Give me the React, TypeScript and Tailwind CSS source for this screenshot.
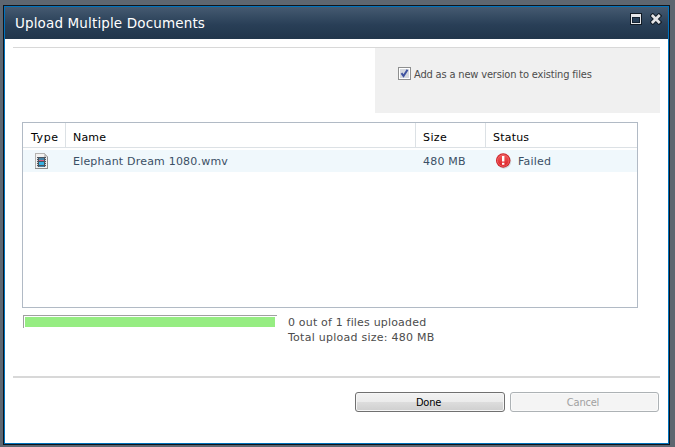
import React from 'react';

function FilmIcon() {
  return (
    <svg width="14" height="16" viewBox="0 0 14 16" shapeRendering="crispEdges">
      <path d="M0 0h10v1h1v1h1v1h1v13H0z" fill="#b4b3b1" />
      <path d="M1 1h8v3h3v11H1z" fill="#f3f2f1" />
      <path d="M9 1h1v2h2v1H9z" fill="#c9c9c8" />
      <path d="M12 4h1v12H0v-1h12z" fill="#8d8d8d" />
      <path d="M2 4h9v10H2z" fill="#4b5560" />
      <path d="M4 5h5v2H4z" fill="#4684a8" />
      <path d="M4 7h5v1H4z" fill="#dd5a80" />
      <path d="M4 9h5v3H4z" fill="#37b2e4" />
      <path d="M4 13h5v1H4z" fill="#4684a8" />
      <path d="M2 5h1v1H2zM2 7h1v1H2zM2 9h1v1H2zM2 11h1v1H2zM2 13h1v1H2zM10 5h1v1h-1zM10 7h1v1h-1zM10 9h1v1h-1zM10 11h1v1h-1zM10 13h1v1h-1z" fill="#d5d9dc" />
    </svg>
  );
}

function ErrorIcon() {
  return (
    <svg width="16" height="16" viewBox="0 0 16 16">
      <defs>
        <linearGradient id="red" x2="0" y2="1">
          <stop stopColor="#f25a5a" />
          <stop offset="1" stopColor="#dc1f25" />
        </linearGradient>
      </defs>
      <circle cx="8" cy="8.5" r="7.2" fill="#bdc4c8" opacity=".6" />
      <circle cx="7.2" cy="7.5" r="7.2" fill="#cf2027" />
      <circle cx="7.2" cy="7.5" r="5.8" fill="url(#red)" stroke="#f27d7d" strokeWidth=".7" />
      <path d="M6 3h2.4v5.5H6zM6 9.7h2.4v2H6z" fill="#fff" />
    </svg>
  );
}

function MaximizeIcon() {
  return (
    <svg width="12" height="12" viewBox="0 0 12 12" shapeRendering="crispEdges">
      <path d="M0 0h12v12H0z" fill="#111a24" />
      <path d="M1 1h10v10H1z" fill="#e7e7e9" />
      <path d="M2 4h8v6H2z" fill="#142231" />
      <path d="M3 5h6v4H3z" fill="#2a4058" />
    </svg>
  );
}

function CloseIcon() {
  return (
    <svg width="12" height="12" viewBox="0 0 12 12">
      <path d="M2.7 2.9l6.2 6.2M8.9 2.9L2.7 9.1" stroke="#141e29" strokeWidth="4.8" strokeLinecap="square" />
      <path d="M2.8 3l6 6M8.8 3l-6 6" stroke="#e4e4e6" strokeWidth="2.7" strokeLinecap="square" />
    </svg>
  );
}

export default function App() {
  return (
    <div className="h-[447px] w-[675px] overflow-hidden bg-[#5e6670] pt-[5px] pl-[3px] font-['DejaVu_Sans',sans-serif] text-[11px] leading-[15px] text-[#4c4c4c]">
      <div className="h-[440px] w-[667px] border border-[#10151d] bg-white">
        <div className="h-[438px] w-[665px] border border-[#0072bc]">
          <header className="flex h-8 items-start justify-between bg-linear-to-b from-[#455a71] via-[#293f57] via-55% to-[#21364b] pr-[6px] pl-[10px]">
            <h1 className="pt-[6px] text-[13.5px] leading-[20px] tracking-[0.14px] whitespace-nowrap text-white">Upload Multiple Documents</h1>
            <div className="flex gap-[8px] pt-[6px]">
              <MaximizeIcon />
              <CloseIcon />
            </div>
          </header>

          <main className="pt-2 pl-2">
            <div className="flex h-[66px] w-[647px] justify-end border-t border-[#d8d8d8]">
              <label className="flex w-[285px] items-start bg-[#f0f0f0] pt-[19px] pl-[23px]">
                <span className="flex size-[13px] shrink-0 border border-[#8e8f8f] bg-white p-px">
                  <svg width="9" height="9" viewBox="0 0 9 9">
                    <path d="M0 0h9v9H0z" fill="#d5d9df" />
                    <path d="M1.5 4.2l2 2.8L7.5.7" fill="none" stroke="#3f53a0" strokeWidth="2" />
                  </svg>
                </span>
                <span className="mt-px ml-[3px] font-['DejaVu_Sans_Condensed','DejaVu_Sans',sans-serif] text-[11px] leading-[13px] tracking-[-0.17px] whitespace-nowrap [font-stretch:condensed]">Add as a new version to existing files</span>
              </label>
            </div>

            <section className="mt-[9px] ml-[9px] h-[186px] w-[616px] border border-[#b1bac5]">
              <div className="flex h-[25px] border-b border-[#dce1e5] leading-[30px] tracking-[0.2px] text-black">
                <div className="w-[43px] border-r border-[#dce1e5] pl-[8px] tracking-[0.6px]">Type</div>
                <div className="w-[350px] border-r border-[#dce1e5] pl-[7px]">Name</div>
                <div className="w-[70px] border-r border-[#dce1e5] pl-[7px] tracking-[0.4px]">Size</div>
                <div className="pl-[7px]">Status</div>
              </div>
              <div className="mt-[2px] flex h-[22px] bg-[#f0f8fc] leading-[24px] tracking-[0.2px] text-[#3b4f65]">
                <div className="w-[43px] pt-[3px] pl-[12px]"><FilmIcon /></div>
                <div className="w-[350px] pl-[7px]">Elephant Dream 1080.wmv</div>
                <div className="w-[70px] pl-[7px]">480 MB</div>
                <div className="flex pl-[10px]">
                  <span className="pt-[3px]"><ErrorIcon /></span>
                  <span className="ml-[6px]">Failed</span>
                </div>
              </div>
            </section>

            <div className="mt-[7px] ml-[10px] flex h-[61px]">
              <div className="h-[13px] w-[254px] border-t border-l border-[#a0a0a0] pt-px pl-px">
                <div className="h-[10px] w-[250px] bg-[#96ed82]" />
              </div>
              <div className="ml-[11px] whitespace-nowrap">
                <div className="tracking-[0.18px]">0 out of 1 files uploaded</div>
                <div className="tracking-[0.25px]">Total upload size: 480 MB</div>
              </div>
            </div>

            <footer className="flex w-[647px] justify-end gap-[5px] border-t-2 border-[#d8d8d8] pt-[14px] pr-px font-['DejaVu_Sans_Condensed','DejaVu_Sans',sans-serif] [font-stretch:condensed]">
              <button className="h-5 w-[150px] rounded-[3px] border border-[#707070] bg-[linear-gradient(to_bottom,#f2f2f2,#ebebeb_50%,#dddddd_50%,#cfcfcf)] pr-[3px] text-[11px] leading-[17px] tracking-[-0.2px] text-black shadow-[inset_0_0_0_1px_#f6f6f6]">Done</button>
              <button disabled className="h-5 w-[149px] rounded-[3px] border border-[#adb2b5] bg-[#f4f4f4] pr-[3px] text-[11px] leading-[17px] tracking-[-0.2px] text-[#a0a0a0] shadow-[inset_0_0_0_1px_#fafafa]">Cancel</button>
            </footer>
          </main>
        </div>
      </div>
    </div>
  );
}
